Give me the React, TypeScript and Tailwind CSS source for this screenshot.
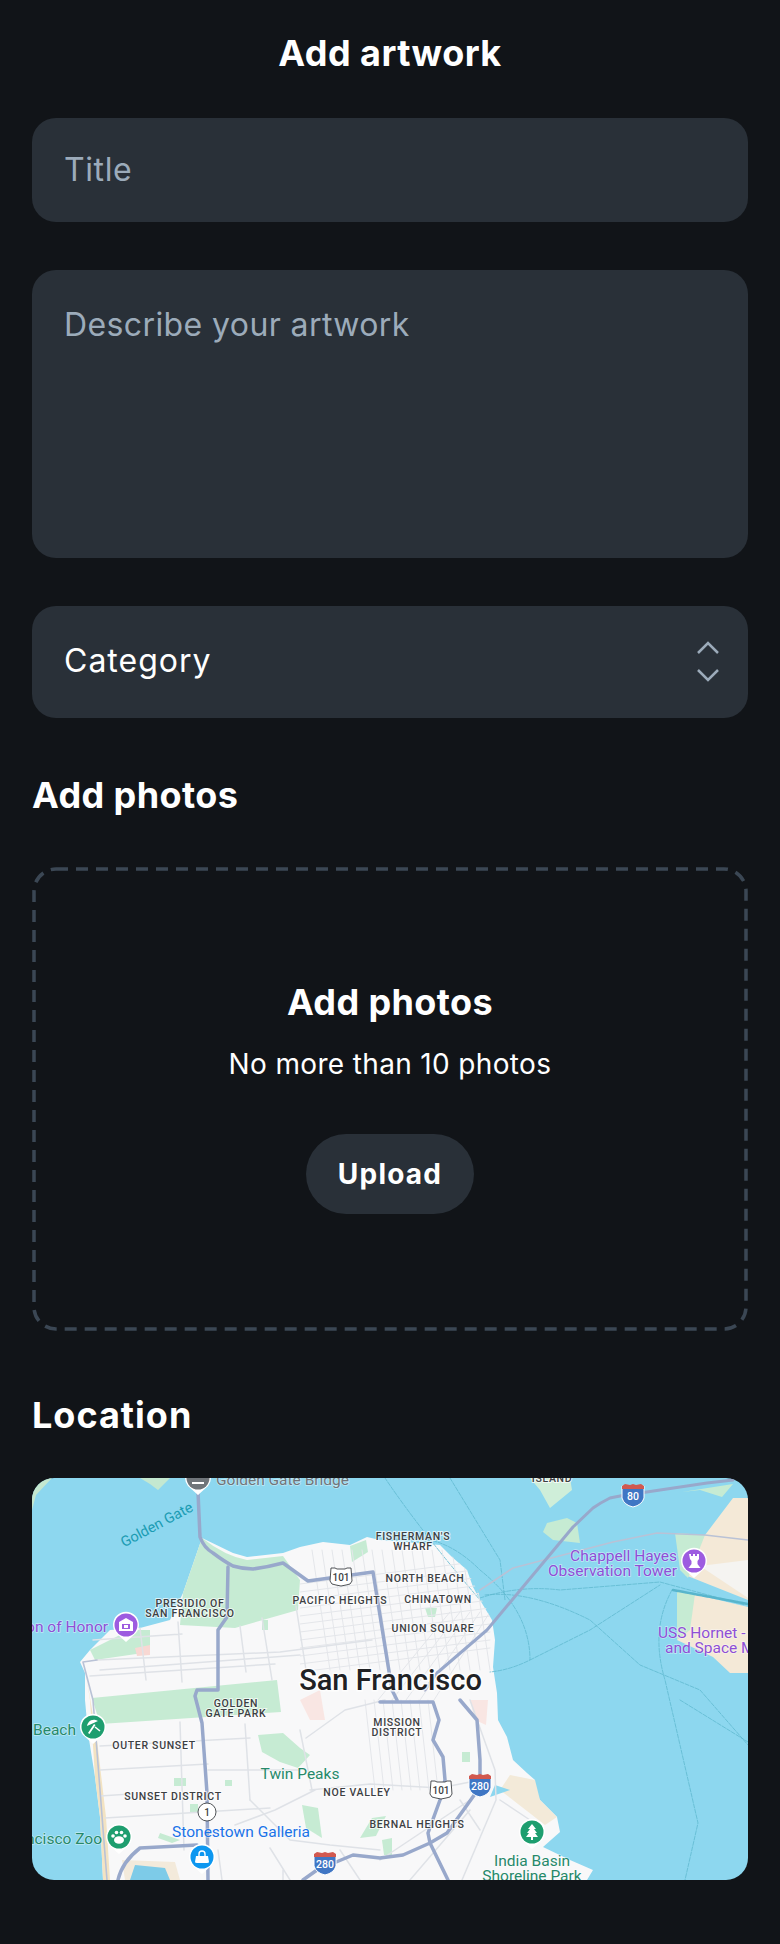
const roads = {
  minor: [
    "M97 1660 L280 1652 L372 1640",
    "M93 1640 L182 1634 M140 1628 L146 1680 M178 1622 L182 1682 M262 1618 L272 1680 M296 1606 L306 1670",
    "M90 1676 L275 1664 M100 1670 L300 1655 M240 1626 L246 1672",
    "M100 1746 L250 1738 M100 1770 L208 1764 M105 1818 L270 1808 M100 1796 L130 1794",
    "M180 1722 L184 1850 M245 1724 L250 1800",
    "M208 1770 L300 1770 M250 1800 L290 1840 L330 1845 L380 1850",
    "M300 1730 L312 1790 M306 1738 L345 1710 L385 1700 M315 1790 L275 1810 L235 1825",
    "M270 1848 L290 1880 M218 1850 L222 1880 M283 1870 L283 1880 M340 1850 L360 1880",
    "M310 1790 L370 1784 L440 1788 L480 1780",
    "M470 1700 L495 1770 L496 1800 L462 1880 M380 1860 L470 1800",
    "M500 1800 L530 1820 M460 1800 L480 1830 M410 1880 L470 1810",
  ],
  highway: [
    "M198 1492 L200 1537 Q204 1548 213 1553 Q225 1562 233 1566 Q243 1569 253 1569 Q268 1567 283 1563 L308 1581 L373 1572 L392 1690 L397 1700",
    "M228 1567 L227 1617 L218 1630 L218 1690 L197 1690 L195 1696 L202 1723 L207 1793 L208 1880",
    "M380 1702 L433 1702 L439 1720 L433 1740 L443 1757 L445 1780 L440 1800 L428 1833 L430 1843 L448 1880",
    "M460 1700 L477 1720 L480 1760 L480 1787 L447 1833 L430 1843 L403 1855 L380 1858 L353 1855 L317 1870 L303 1880",
    "M118 1880 Q122 1862 140 1848 L197 1845",
  ],
  bayBridge: "M733 1480 L707 1483 L640 1493 Q618 1496 610 1498 Q600 1503 593 1508 L573 1527 L487 1630 L437 1673 L425 1690",
  thin: ["M83 1662 L97 1660 M83 1662 L93 1700 L107 1880", "M480 1590 L513 1568 L563 1555 L613 1542 L657 1533 L705 1535 L748 1540"],
  ferry: [
    "M385 1478 Q420 1530 480 1600",
    "M450 1478 L500 1560 L505 1600",
    "M395 1540 Q440 1530 480 1570 Q530 1610 530 1660 Q510 1670 490 1672",
    "M480 1598 Q520 1585 560 1590 L660 1582 L745 1605",
    "M485 1595 Q530 1590 590 1620 L640 1665 L700 1690 L748 1745",
    "M530 1660 L590 1630 L660 1585",
    "M672 1590 Q650 1630 665 1680 L698 1823 L685 1880",
    "M680 1700 L748 1742",
  ],
};

// street grids: north east blocks and the mission
const gridLines: string[] = [];
for (let i = 0; i < 17; i++) {
  gridLines.push(`M${312 + i * 10} 1550 L${330 + i * 10} 1670`);
}
for (let i = 0; i < 12; i++) {
  gridLines.push(`M300 ${1614 + i * 8 - 30} L490 ${1590 + i * 8 - 30}`);
}
for (let i = 0; i < 8; i++) {
  gridLines.push(`M${365 + i * 9} 1700 L${375 + i * 9} 1790`);
}
for (let i = 0; i < 5; i++) {
  gridLines.push(`M${378 + i * 14} 1700 L${450 + i * 10} 1612`);
}

const parkBlobs = [
  "M202 1538 Q225 1556 247 1560 L283 1556 L300 1580 L298 1610 L235 1628 L180 1625 L183 1593 Z",
  "M90 1650 L130 1630 L150 1630 L150 1652 L95 1660 Z",
  "M92 1698 L277 1680 L281 1712 L100 1724 Z",
  "M258 1735 L283 1733 L300 1748 L310 1755 L298 1768 L280 1762 L262 1752 Z",
  "M350 1546 L366 1540 L368 1552 L352 1562 Z",
  "M302 1805 L318 1808 L322 1838 L306 1828 Z",
  "M262 1620 L268 1620 L268 1630 L262 1630 Z",
  "M360 1838 L372 1818 L386 1816 L376 1836 Z",
  "M382 1840 L392 1838 L392 1855 L384 1855 Z",
  "M425 1608 L437 1608 L435 1617 L428 1617 Z",
  "M174 1778 L186 1778 L186 1786 L174 1786 Z",
  "M225 1780 L232 1780 L232 1786 L225 1786 Z",
  "M190 1804 L198 1804 L198 1812 L190 1812 Z",
  "M160 1833 L180 1840 L172 1843 L158 1838 Z",
  "M462 1752 L470 1752 L470 1762 L462 1762 Z",
];

const smallLabels = [
  { lines: ["FISHERMAN'S", "WHARF"], x: 413, y: 1540 },
  { lines: ["NORTH BEACH"], x: 425, y: 1582 },
  { lines: ["PACIFIC HEIGHTS"], x: 340, y: 1604 },
  { lines: ["CHINATOWN"], x: 438, y: 1603 },
  { lines: ["UNION SQUARE"], x: 433, y: 1632 },
  { lines: ["PRESIDIO OF", "SAN FRANCISCO"], x: 190, y: 1607 },
  { lines: ["GOLDEN", "GATE PARK"], x: 236, y: 1707 },
  { lines: ["OUTER SUNSET"], x: 154, y: 1749 },
  { lines: ["SUNSET DISTRICT"], x: 173, y: 1800 },
  { lines: ["NOE VALLEY"], x: 357, y: 1796 },
  { lines: ["BERNAL HEIGHTS"], x: 417, y: 1828 },
  { lines: ["MISSION", "DISTRICT"], x: 397, y: 1726 },
  { lines: ["ISLAND"], x: 552, y: 1482 },
];

const poiLabels = [
  { text: "Golden Gate Bridge", x: 216, y: 1485, anchor: "start", fill: "#70757a" },
  { text: "Legion of Honor", x: 108, y: 1632, anchor: "end", fill: "#8e4fd6" },
  { text: "Chappell Hayes", x: 677, y: 1561, anchor: "end", fill: "#8e4fd6" },
  { text: "Observation Tower", x: 677, y: 1576, anchor: "end", fill: "#8e4fd6" },
  { text: "USS Hornet - Sea, Air", x: 658, y: 1638, anchor: "start", fill: "#8e4fd6" },
  { text: "and Space Museum", x: 665, y: 1653, anchor: "start", fill: "#8e4fd6" },
  { text: "Twin Peaks", x: 300, y: 1779, anchor: "middle", fill: "#26896a" },
  { text: "Ocean Beach", x: 76, y: 1735, anchor: "end", fill: "#26896a" },
  { text: "San Francisco Zoo", x: 102, y: 1844, anchor: "end", fill: "#26896a" },
  { text: "Stonestown Galleria", x: 241, y: 1837, anchor: "middle", fill: "#1a73e8" },
  { text: "India Basin", x: 532, y: 1866, anchor: "middle", fill: "#26896a" },
  { text: "Shoreline Park", x: 532, y: 1881, anchor: "middle", fill: "#26896a" },
];

function Pin({ x, y, color, children }: { x: number; y: number; color: string; children?: React.ReactNode }) {
  return (
    <g transform={`translate(${x} ${y})`}>
      <path d="M0 17 L-10 8 A13 13 0 1 1 10 8 Z" fill="#fff" />
      <circle r="11.5" fill={color} />
      <g fill="#fff">{children}</g>
    </g>
  );
}

function Interstate({ x, y, num }: { x: number; y: number; num: string }) {
  return (
    <g transform={`translate(${x} ${y})`}>
      <path d="M-11 -9 L11 -9 L11 3 Q9 10 0 12 Q-9 10 -11 3 Z" fill="#3f76c4" stroke="#fff" strokeWidth="1" />
      <path d="M-11 -9 L-8 -11 L-3 -10 L0 -11 L3 -10 L8 -11 L11 -9 L11 -6 L-11 -6 Z" fill="#d1584f" />
      <text y="5" textAnchor="middle" fontSize="10.5" fontWeight="500" fill="#fff">{num}</text>
    </g>
  );
}

function Us({ x, y, num }: { x: number; y: number; num: string }) {
  return (
    <g transform={`translate(${x} ${y})`}>
      <path d="M-10 -9 L-6 -9 L-4 -8 L4 -8 L6 -9 L10 -9 L11 4 Q10 8 5 8 L0 9 L-5 8 Q-10 8 -11 4 Z" fill="#fff" stroke="#3c4043" strokeWidth="0.9" />
      <text y="4" textAnchor="middle" fontSize="10" fontWeight="500" fill="#3c4043">{num}</text>
    </g>
  );
}

function SfMap() {
  return (
    <div className="h-[402px] overflow-hidden rounded-[22px] bg-[#8dd7ef]">
      <svg viewBox="32 1478 716 402" width="716" height="402" className="block font-[Roboto,sans-serif]">
        {/* land */}
        <path d="M202 1538 L233 1553 L247 1557 L283 1553 L300 1547 L323 1542 L350 1545 L367 1537 L380 1540 L440 1545 L452 1557 L467 1570 L473 1587 L480 1600 L492 1620 L495 1640 L493 1667 L497 1693 L498 1720 L507 1737 L513 1760 L527 1773 L535 1780 L533 1787 L540 1800 L557 1817 L560 1832 L543 1847 L570 1860 L593 1870 L587 1880 L103 1880 L100 1817 L95 1777 L88 1733 L85 1700 L85 1673 L80 1662 L90 1650 L110 1630 L140 1628 L170 1620 L183 1593 Z" fill="#f8f8f9" />
        <path d="M85 1668 L90 1700 L95 1777 L100 1817 L103 1880 L110 1880 L106 1817 L97 1740 Z" fill="#f3e3c2" />
        <path d="M510 1775 L535 1780 L540 1800 L557 1817 L545 1825 L500 1790 Z" fill="#f3ead9" />
        {/* east bay */}
        <path d="M733 1498 L748 1498 L748 1600 L685 1575 L682 1540 L705 1535 Z" fill="#f4e9d7" />
        <path d="M700 1566 L748 1560 L748 1598 Z" fill="#f5f4f1" />
        <path d="M675 1533 L705 1535 L688 1578 L680 1570 Z" fill="#c6ebd3" />
        <path d="M677 1590 L748 1607 L748 1673 L730 1673 L713 1657 L677 1640 Z" fill="#f4e9d7" />
        <path d="M677 1590 L695 1594 L690 1630 L677 1640 Z" fill="#c6ebd3" />
        <path d="M682 1492 L733 1484 L722 1497 L700 1490 Z" fill="#c6ebd3" />
        {/* islands */}
        <path d="M530 1478 L570 1478 L572 1490 L550 1508 L540 1490 Z" fill="#cfeed9" />
        <path d="M543 1532 L547 1523 L567 1518 L577 1523 L580 1543 L553 1540 Z" fill="#c6ebd3" />
        {/* top-left of the Marin shore */}
        <path d="M32 1478 L52 1478 L36 1495 L32 1510 Z" fill="#c4e8d0" />
        <path d="M140 1478 L170 1478 L158 1490 L150 1484 Z" fill="#c4e8d0" />
        {/* parks */}
        {parkBlobs.map((d) => (
          <path key={d} d={d} fill="#c6ebd3" />
        ))}
        <path d="M135 1648 L150 1645 L150 1655 L137 1656 Z" fill="#f8d8d3" />
        <path d="M300 1700 L320 1690 L325 1720 L310 1720 Z" fill="#f9e6e3" />
        <path d="M470 1700 L488 1700 L486 1725 L475 1720 Z" fill="#f9e6e3" />
        <path d="M122 1860 L175 1862 L180 1880 L125 1880 Z" fill="#f3eadb" />
        <path d="M135 1865 L165 1868 L170 1880 L130 1880 Z" fill="#7dcbe8" />
        <path d="M495 1785 L510 1790 L490 1797 Z" fill="#8dd7ef" />

        {/* roads */}
        <g fill="none" strokeLinejoin="round" strokeLinecap="round">
          {roads.ferry.map((d) => (
            <path key={d} d={d} stroke="#5fb9cf" strokeWidth="0.8" strokeDasharray="4 1.5" />
          ))}
          <path d="M673 1590 L748 1604" stroke="#58b5cc" strokeWidth="2.5" strokeDasharray="5 1" />
          <clipPath id="city">
            <path d="M300 1547 L440 1545 L467 1570 L492 1620 L497 1693 L498 1800 L300 1800 Z" />
          </clipPath>
          <g clipPath="url(#city)">
            {gridLines.map((d) => (
              <path key={d} d={d} stroke="#e4e6ea" strokeWidth="1" />
            ))}
          </g>
          {roads.minor.map((d) => (
            <path key={d} d={d} stroke="#dfe2e7" strokeWidth="1.5" />
          ))}
          {roads.thin.map((d) => (
            <path key={d} d={d} stroke="#b9c2d6" strokeWidth="1.6" />
          ))}
          {roads.highway.map((d) => (
            <path key={d} d={d} stroke="#98a8cb" strokeWidth="3.5" />
          ))}
          <path d={roads.bayBridge} stroke="#98a8cb" strokeWidth="3" />
        </g>

        {/* road shields */}
        <Us x={341} y={1577} num="101" />
        <Us x={441} y={1790} num="101" />
        <g transform="translate(207 1812)">
          <circle r="9" fill="#fff" stroke="#3c4043" strokeWidth="0.9" />
          <text y="3.5" textAnchor="middle" fontSize="10" fontWeight="500" fill="#3c4043">1</text>
        </g>
        <Interstate x={633} y={1495} num="80" />
        <Interstate x={480} y={1785} num="280" />
        <Interstate x={325} y={1863} num="280" />

        <text transform="translate(159 1529) rotate(-28)" textAnchor="middle" fontSize="14.5" fill="#1c9cb3">Golden Gate</text>

        {smallLabels.map((label) =>
          label.lines.map((line, i) => (
            <text key={line} x={label.x} y={label.y + i * 10} textAnchor="middle" fontSize="10.5" fontWeight="500" letterSpacing="0.7" fill="#3c4043" stroke="#fff" strokeOpacity="0.7" strokeWidth="2" paintOrder="stroke">
              {line}
            </text>
          ))
        )}

        {poiLabels.map((label) => (
          <text key={label.text} x={label.x} y={label.y} textAnchor={label.anchor as "start"} fontSize="15.5" fill={label.fill} stroke="#fff" strokeOpacity="0.45" strokeWidth="1.5" paintOrder="stroke">
            {label.text}
          </text>
        ))}

        <text x="390.5" y="1690" textAnchor="middle" fontSize="29" fontWeight="500" fill="#202124" stroke="#fff" strokeOpacity="0.8" strokeWidth="3" paintOrder="stroke">San Francisco</text>

        {/* place pins */}
        <Pin x={198} y={1478} color="#70757a">
          <path d="M-6 4 h12 v2 h-12 z" />
        </Pin>
        <Pin x={126} y={1625} color="#9d5ce0">
          <path d="M-7 -3 L0 -7 L7 -3 V6 H-7 Z M-4 -1 V4 H4 V-1 Z" fillRule="evenodd" />
          <path d="M-2 0 H2 V3 H-2 Z" />
        </Pin>
        <Pin x={694} y={1561} color="#9d5ce0">
          <path d="M-5 -7 h2 v2 h2 v-2 h2 v2 h2 v-2 h2 v5 l-1.5 2 v3 l3 4 h-12 l3 -4 v-3 l-1.5 -2 z" />
        </Pin>
        <Pin x={93} y={1727} color="#1e9e6f">
          <path d="M-6 -1 A7 7 0 0 1 5 -6 Z M-5 6 L1 -3 L2.5 -2 L-3.5 7 Z" />
          <path d="M2 0 L7 4" stroke="#fff" strokeWidth="1.6" />
        </Pin>
        <Pin x={119} y={1837} color="#1e9e6f">
          <ellipse cx="0" cy="3" rx="5" ry="3.8" />
          <circle cx="-6" cy="-1" r="1.8" />
          <circle cx="-2.5" cy="-4.5" r="1.8" />
          <circle cx="2.5" cy="-4.5" r="1.8" />
          <circle cx="6" cy="-1" r="1.8" />
        </Pin>
        <Pin x={202} y={1857} color="#0d97f0">
          <path d="M-6 -1 L6 -1 L7 5 Q7 6 5 6 H-5 Q-7 6 -7 5 Z" />
          <path d="M-3 -1 V-3 A3 3 0 0 1 3 -3 V-1" fill="none" stroke="#fff" strokeWidth="1.4" />
        </Pin>
        <Pin x={532} y={1832} color="#1e9e6f">
          <path d="M0 -8 L4 -3 H2 L5 1 H3 L6 5 H1 V8 H-1 V5 H-6 L-3 1 H-5 L-2 -3 H-4 Z" />
        </Pin>
      </svg>
    </div>
  );
}

export default function App() {
  return (
    <div className="min-h-[1944px] bg-[#111418] px-8 font-[Inter,sans-serif] text-white">
      <h1 className="pt-[31px] text-center text-[36px] leading-[44px] font-bold tracking-[0.45px]">Add artwork</h1>

      <div className="mt-[43px] flex h-[104px] items-center rounded-[24px] bg-[#293038] px-8 text-[32px] tracking-[0.6px] text-[#9cabba]">
        Title
      </div>

      <div className="mt-12 h-[288px] rounded-[24px] bg-[#293038] px-8 pt-[33px] text-[32px] leading-[44px] tracking-[0.4px] text-[#9cabba]">
        Describe your artwork
      </div>

      <button className="mt-12 flex h-[112px] w-full items-center justify-between rounded-[24px] bg-[#293038] pr-7 pl-8 text-[32px] tracking-[1px]">
        <span className="-mt-[2px]">Category</span>
        <svg width="24" height="42" viewBox="0 0 24 42" fill="none" stroke="#9cabba" strokeWidth="2.5">
          <path d="M2 12 L12 2 L22 12" />
          <path d="M2 29 L12 39 L22 29" />
        </svg>
      </button>

      <h2 className="mt-[54px] text-[36px] leading-[46px] font-bold tracking-[0.4px]">Add photos</h2>

      <div className="relative mt-[49px] flex h-[464px] flex-col items-center pt-[112px]">
        <svg width="716" height="464" className="absolute inset-0" fill="none">
          <rect x="2" y="2" width="712" height="460" rx="22" stroke="#3b4754" strokeWidth="3.5" strokeDasharray="12 8" />
        </svg>
        <h3 className="text-[36px] leading-[46px] font-bold tracking-[0.4px]">Add photos</h3>
        <p className="mt-[18px] text-[28px] leading-[42px] tracking-[0.35px]">No more than 10 photos</p>
        <button className="mt-[49px] h-[80px] w-[168px] rounded-full bg-[#293038] text-[28px] font-bold tracking-[1.2px]">Upload</button>
      </div>

      <h2 className="mt-[61px] text-[36px] leading-[46px] font-bold tracking-[1px]">Location</h2>

      <div className="mt-[40px]">
        <SfMap />
      </div>
    </div>
  );
}
